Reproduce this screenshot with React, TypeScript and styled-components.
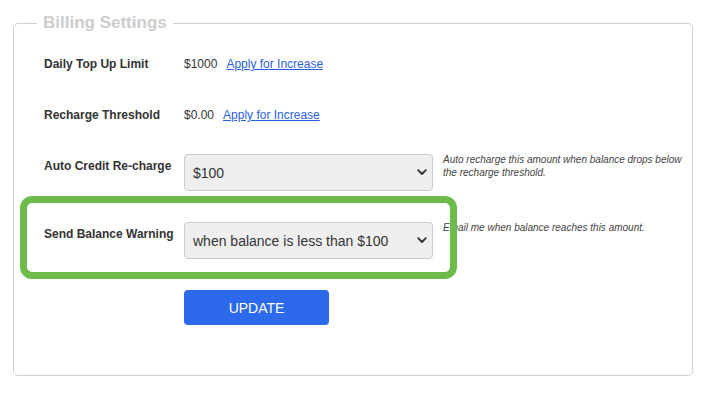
import React from "react";
import styled, { createGlobalStyle } from "styled-components";

const Global = createGlobalStyle`
  html, body { margin: 0; padding: 0; background: #fff; }
  body { font-family: "Liberation Sans", Arial, sans-serif; color: #333; }
`;

const Page = styled.div`
  padding-top: 14px;
  width: 706px;
  height: 393px;
  box-sizing: border-box;
`;

const Fieldset = styled.fieldset`
  margin: 0 13px;
  padding: 0 0 50px 0;
  border: 1px solid #cfcfcf;
  border-radius: 5px;
  min-width: 0;
`;

const Legend = styled.legend`
  margin-left: 23px;
  padding: 0 6px;
  font-size: 17px;
  line-height: 18px;
  font-weight: bold;
  color: #cdcdcd;
`;

const Form = styled.div`
  display: flex;
  flex-direction: column;
  padding: 20px 0 0 30px;
`;

const Row = styled.div<{ $top: number; $align?: string }>`
  position: relative;
  display: flex;
  align-items: ${(p) => p.$align || "center"};
  margin-top: ${(p) => p.$top}px;
  min-height: 24px;
`;

const Label = styled.div<{ $pad?: number }>`
  width: 140px;
  flex: none;
  font-size: 12px;
  line-height: 14px;
  font-weight: bold;
  color: #333;
  padding-top: ${(p) => p.$pad || 0}px;
`;

const Value = styled.span`
  font-size: 12px;
  color: #333;
  margin-right: 9px;
`;

const Link = styled.a`
  font-size: 12px;
  color: #2a5fe0;
  text-decoration: underline;
  cursor: pointer;
`;

const SelectWrap = styled.div`
  position: relative;
  width: 249px;
  flex: none;
`;

const Select = styled.select`
  appearance: none;
  -webkit-appearance: none;
  width: 100%;
  height: 37px;
  box-sizing: border-box;
  padding: 0 30px 0 8px;
  background: #efefef;
  border: 1px solid #cbcbcb;
  border-radius: 4px;
  font-family: "Liberation Sans", Arial, sans-serif;
  font-size: 14px;
  color: #333;
  outline: none;
`;

const Chevron = styled.svg`
  position: absolute;
  right: 6px;
  top: 15px;
  width: 10px;
  height: 7px;
  pointer-events: none;
`;

const Help = styled.div`
  margin-left: 10px;
  margin-top: -1px;
  width: 245px;
  font-size: 10px;
  line-height: 13px;
  font-style: italic;
  color: #444;
`;

const Highlight = styled.div`
  position: absolute;
  left: -24px;
  top: -26px;
  width: 437px;
  height: 83px;
  box-sizing: border-box;
  border: 7px solid #6dbb4b;
  border-radius: 12px;
  pointer-events: none;
`;

const ButtonRow = styled.div`
  margin-top: 31px;
  padding-left: 140px;
`;

const Button = styled.button`
  width: 145px;
  height: 35px;
  border: none;
  border-radius: 4px;
  background: #2c69eb;
  color: #fff;
  font-family: "Liberation Sans", Arial, sans-serif;
  font-size: 14px;
  cursor: pointer;
`;

const Arrow = () => (
  <Chevron viewBox="0 0 10 7">
    <path d="M1.2 1.2 L5 5 L8.8 1.2" fill="none" stroke="#333" strokeWidth="1.9" strokeLinecap="round" strokeLinejoin="round" />
  </Chevron>
);

export default function App() {
  return (
    <>
      <Global />
      <Page>
        <Fieldset>
          <Legend>Billing Settings</Legend>
          <Form>
            <Row $top={0}>
              <Label>Daily Top Up Limit</Label>
              <Value>$1000</Value>
              <Link>Apply for Increase</Link>
            </Row>
            <Row $top={27}>
              <Label>Recharge Threshold</Label>
              <Value>$0.00</Value>
              <Link>Apply for Increase</Link>
            </Row>
            <Row $top={27} $align="flex-start">
              <Label $pad={5}>Auto Credit Re-charge</Label>
              <SelectWrap>
                <Select defaultValue="100">
                  <option value="100">$100</option>
                </Select>
                <Arrow />
              </SelectWrap>
              <Help>Auto recharge this amount when balance drops below the recharge threshold.</Help>
            </Row>
            <Row $top={31} $align="flex-start">
              <Label $pad={5}>Send Balance Warning</Label>
              <SelectWrap>
                <Select defaultValue="100">
                  <option value="100">when balance is less than $100</option>
                </Select>
                <Arrow />
              </SelectWrap>
              <Help>Email me when balance reaches this amount.</Help>
              <Highlight />
            </Row>
            <ButtonRow>
              <Button>UPDATE</Button>
            </ButtonRow>
          </Form>
        </Fieldset>
      </Page>
    </>
  );
}
